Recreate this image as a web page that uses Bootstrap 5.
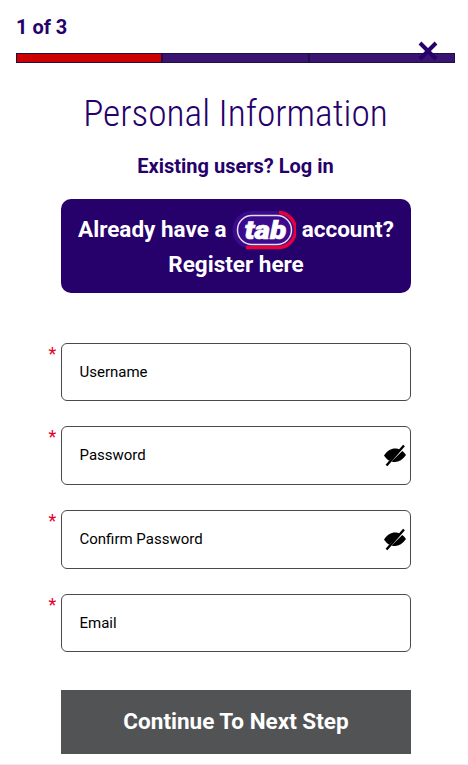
<!DOCTYPE html>
<html lang="en"><head><meta charset="utf-8"><title>Personal Information</title>
<link href="https://cdn.jsdelivr.net/npm/bootstrap@5.3.0/dist/css/bootstrap.min.css" rel="stylesheet">
<style>
html,body{height:765px;overflow:hidden}
body{font-family:Roboto,"Liberation Sans",sans-serif;background:#fff;color:#000}
.shell{height:765px;padding:16px 13px 0 16px;border-bottom:1px solid #f1edf6}
.stepno{font-size:20px;font-weight:700;line-height:23px;color:#26006b;margin-bottom:14px}
.stepbar{height:10px;border:1px solid #1f1147;background:#1f1147;gap:2px}
.seg{flex:1 1 0;background:#3b1472}
.seg-on{background:#c00;flex:0 0 144px}
.closer{position:absolute;right:17px;top:-12px;width:20px;height:20px;border:0;background:none;padding:0;line-height:0}
.heading{font-size:37.4px;font-weight:300;color:#26006b;line-height:44px;margin:28px 0 0;font-stretch:condensed;text-align:center}
.login{font-size:20px;font-weight:700;color:#26006b;line-height:24px;margin-top:19px;text-align:center;text-decoration:none;display:block}
.formcol{width:350px;margin-left:45px}
.promo{background:#26006b;color:#fff;border-radius:10px;height:94px;font-size:22.5px;font-weight:700;line-height:35px;padding:13px 8px 0;margin-top:21px;text-align:center}
.promo svg{vertical-align:middle;margin:-12px 0 -10px 0}
.logotext{font:italic 900 25px Roboto,sans-serif;fill:#fff;stroke:#fff;stroke-width:.6}
.fieldrow{margin-bottom:25px}
.fieldrow:first-of-type{margin-top:49.8px}
.req{position:absolute;left:-12.5px;top:1px;color:#e4002b;font-size:18px;line-height:20px}
.field{height:58.67px;border:1px solid #4a4a4a;border-radius:6px;padding:0 18px 1px 17.5px;font-size:15px;color:#000}
.field::placeholder{color:#000;opacity:1}
.field:focus{border-color:#4a4a4a;box-shadow:none}
.eye{position:absolute;right:4px;top:16.500px;line-height:0;background:none;border:0;padding:0}
.nextbtn{height:64px;width:100%;margin-top:12.2px;border:0;border-radius:0;background:#525355;color:#fff;font-size:22.5px;font-weight:700;padding:0}
</style></head><body>
<div class="shell">
<div class="stepno">1 of 3</div>
<div class="position-relative">
<div class="stepbar d-flex"><div class="seg seg-on"></div><div class="seg"></div><div class="seg"></div></div>
<button class="closer" aria-label="Close"><svg width="20" height="20" viewBox="0 0 20 20"><path d="M2 2 18 18M18 2 2 18" stroke="#26006b" stroke-width="4"/></svg></button>
</div>
<h1 class="heading">Personal Information</h1>
<a class="login" href="#">Existing users? Log in</a>
<div class="formcol">
<div class="promo">Already have a <svg width="64" height="40" viewBox="0 0 64 40"><rect x="0.500" y="1" width="62" height="38" rx="19" fill="#3c0a8c"/><path d="M47 2.500A17 17 0 0 1 45 37.500H14" fill="none" stroke="#e8003d" stroke-width="3.500"/><rect x="5.500" y="5.500" width="54" height="29" rx="14.500" fill="#3c0a8c" stroke="#e4dff0" stroke-width="1.500"/><text x="12.500" y="28.500" textLength="42" lengthAdjust="spacingAndGlyphs" class="logotext">tab</text></svg> account?<br>Register here</div>
<form>
<div class="fieldrow position-relative"><span class="req">*</span><input class="form-control field" placeholder="Username"></div>
<div class="fieldrow position-relative"><span class="req">*</span><input class="form-control field" type="password" placeholder="Password"><button type="button" class="eye" aria-label="Show"><svg width="24" height="24" viewBox="0 0 24 24"><path d="M1 12.500C4 8 8 5.500 12 5.500c1.900 0 3.600.5 5 1.300L6.200 17.800C4.200 16.500 2.400 14.700 1 12.500zM23 12c-3.200 4.700-7 7-11 7-1.200 0-2.400-.2-3.500-.6L19.300 8c1.400 1 2.600 2.400 3.700 4z" fill="#000"/><path d="M3.500 22.500 21 2.500" stroke="#000" stroke-width="2.400"/></svg></button></div>
<div class="fieldrow position-relative"><span class="req">*</span><input class="form-control field" type="password" placeholder="Confirm Password"><button type="button" class="eye" aria-label="Show"><svg width="24" height="24" viewBox="0 0 24 24"><path d="M1 12.500C4 8 8 5.500 12 5.500c1.900 0 3.600.5 5 1.300L6.200 17.800C4.200 16.500 2.400 14.700 1 12.500zM23 12c-3.200 4.700-7 7-11 7-1.200 0-2.400-.2-3.500-.6L19.300 8c1.400 1 2.600 2.400 3.700 4z" fill="#000"/><path d="M3.500 22.500 21 2.500" stroke="#000" stroke-width="2.400"/></svg></button></div>
<div class="fieldrow position-relative"><span class="req">*</span><input class="form-control field" type="email" placeholder="Email"></div>
<button type="button" class="btn nextbtn">Continue To Next Step</button>
</form>
</div>
</div>
<script src="https://cdn.jsdelivr.net/npm/bootstrap@5.3.0/dist/js/bootstrap.bundle.min.js"></script>
</body></html>
